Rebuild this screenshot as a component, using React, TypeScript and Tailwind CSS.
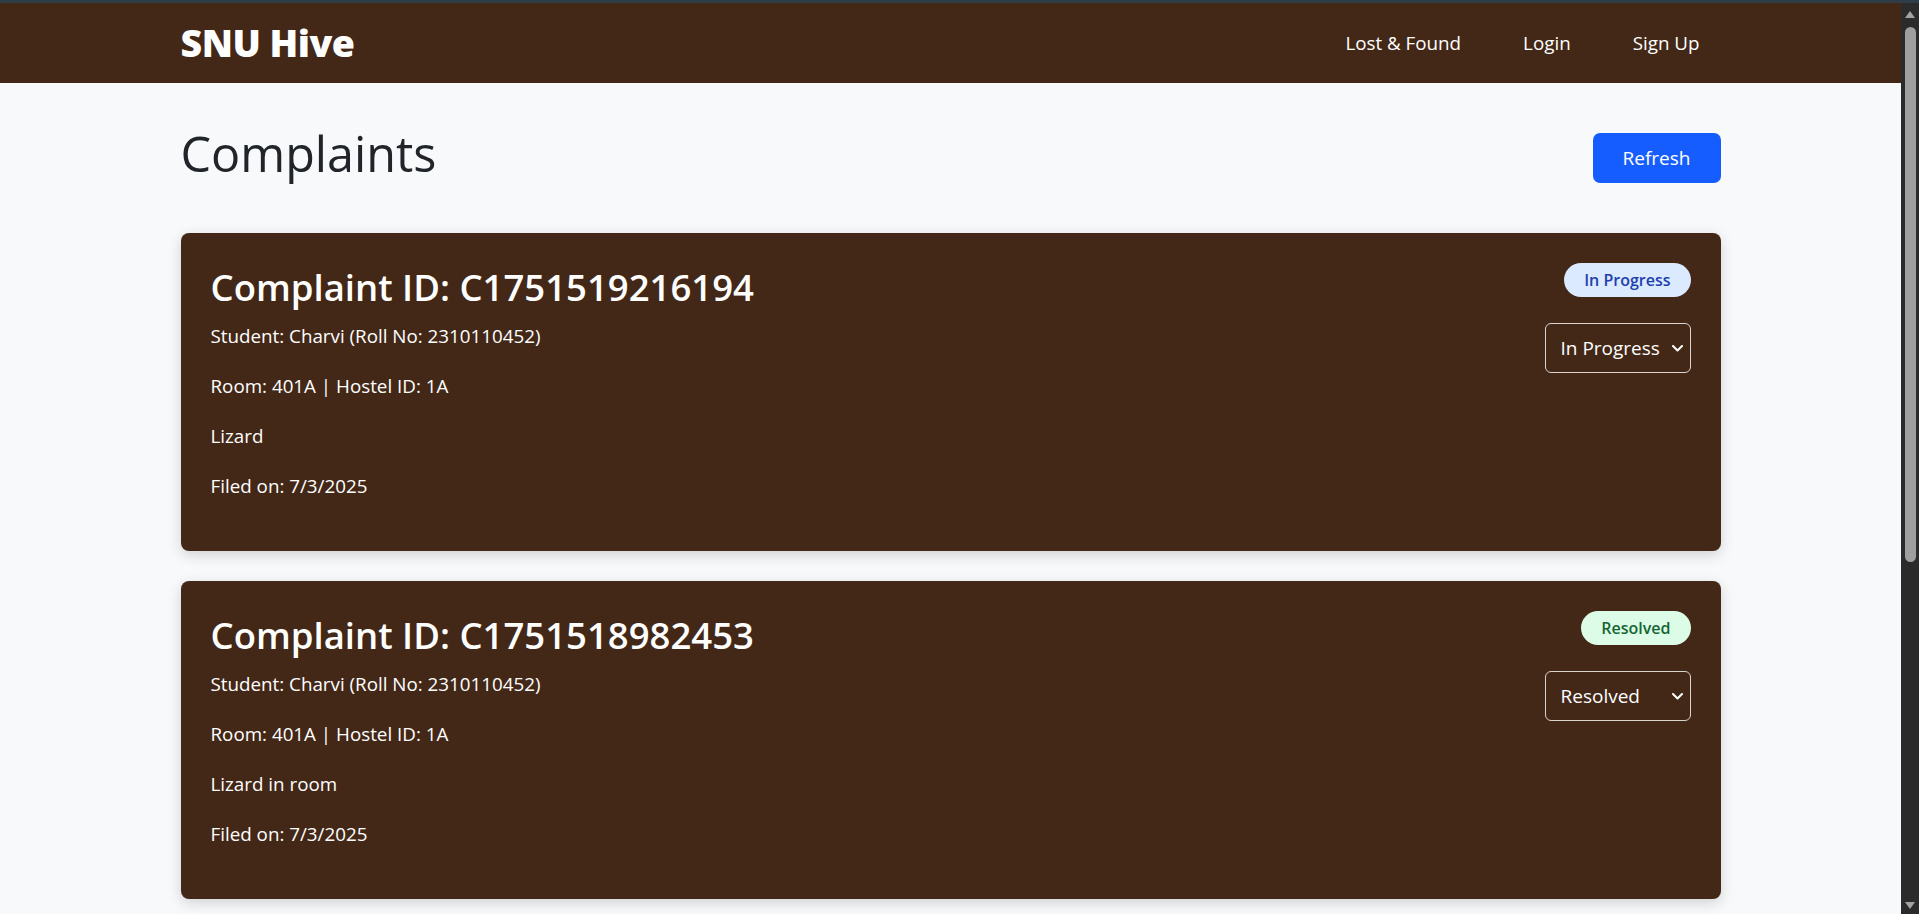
import React from "react";

type Complaint = {
    id: string;
    student: string;
    roll: string;
    room: string;
    hostel: string;
    description: string;
    filedOn: string;
    status: "In Progress" | "Resolved";
};

const complaints: Complaint[] = [
    {
        id: "C1751519216194",
        student: "Charvi",
        roll: "2310110452",
        room: "401A",
        hostel: "1A",
        description: "Lizard",
        filedOn: "7/3/2025",
        status: "In Progress",
    },
    {
        id: "C1751518982453",
        student: "Charvi",
        roll: "2310110452",
        room: "401A",
        hostel: "1A",
        description: "Lizard in room",
        filedOn: "7/3/2025",
        status: "Resolved",
    },
];

function StatusBadge({ status }: { status: Complaint["status"] }) {
    const styles =
        status === "Resolved"
            ? "bg-[#dcfce7] text-[#166534]"
            : "bg-[#dbeafe] text-[#1e40af]";
    return (
        <span className={`h-[34px] px-[20px] rounded-full flex items-center text-[16px] font-semibold ${styles}`}>
            {status}
        </span>
    );
}

function StatusSelect({ value }: { value: string }) {
    return (
        <div className="w-[146px] h-[50px] rounded-[6px] border border-[#d9d4d0] flex items-center justify-between pl-[15px] pr-[7px] text-[19px] text-white">
            <span>{value}</span>
            <svg width="11" height="7" viewBox="0 0 11 7" fill="none">
                <path d="M1 1l4.5 4.5L10 1" stroke="white" strokeWidth="2" strokeLinecap="round" strokeLinejoin="round" />
            </svg>
        </div>
    );
}

function ComplaintCard({ c }: { c: Complaint }) {
    return (
        <div className="bg-[#432818] rounded-[8px] shadow-[0_4px_14px_rgba(0,0,0,0.16)] p-[30px] mb-[30px] flex justify-between text-white">
            <div>
                <h2 className="text-[36.5px] leading-[48px] font-semibold mb-[10px]">Complaint ID: {c.id}</h2>
                <p className="text-[18.8px] leading-[30px] mb-[20px]">
                    Student: {c.student} (Roll No: {c.roll})
                </p>
                <p className="text-[18.8px] leading-[30px] mb-[20px]">
                    Room: {c.room} | Hostel ID: {c.hostel}
                </p>
                <p className="text-[18.8px] leading-[30px] mb-[20px]">{c.description}</p>
                <p className="text-[18.8px] leading-[30px] mb-[20px]">Filed on: {c.filedOn}</p>
            </div>
            <div className="flex flex-col items-end gap-[26px]">
                <StatusBadge status={c.status} />
                <StatusSelect value={c.status} />
            </div>
        </div>
    );
}

function Scrollbar() {
    return (
        <div className="w-[18px] shrink-0 bg-[#2b2b2b] flex flex-col items-center">
            <svg width="10" height="7" viewBox="0 0 10 7" className="mt-[8px]">
                <path d="M5 0L10 7H0z" fill="#a3a3a3" />
            </svg>
            <div className="w-[11px] h-[535px] mt-[9px] rounded-full bg-[#9f9f9f]" />
            <div className="flex-1" />
            <svg width="10" height="7" viewBox="0 0 10 7" className="mb-[5px]">
                <path d="M0 0H10L5 7z" fill="#a3a3a3" />
            </svg>
        </div>
    );
}

export default function App() {
    return (
        <div className="h-[914px] flex flex-col bg-[#f8f9fa] overflow-hidden font-['Open_Sans',sans-serif]">
            <div className="h-[3px] shrink-0 bg-[#2f3d47]" />
            <div className="flex flex-1 min-h-0">
                <div className="flex-1 min-w-0 overflow-hidden">
                    {/* Navbar */}
                    <nav className="h-[80px] bg-[#432818]">
                        <div className="w-[1540px] mx-auto h-full flex items-center justify-between">
                            <a href="#" className="text-[37.5px] font-extrabold text-white tracking-[-0.5px]">
                                SNU Hive
                            </a>
                            <div className="flex items-center gap-[22px] text-[18.8px] text-white">
                                <a href="#" className="px-[20px]">Lost &amp; Found</a>
                                <a href="#" className="px-[20px]">Login</a>
                                <a href="#" className="pl-[20px] pr-[21px]">Sign Up</a>
                            </div>
                        </div>
                    </nav>

                    {/* Main Content */}
                    <main className="w-[1540px] mx-auto pt-[40px]">
                        <div className="flex items-center justify-between mb-[40px]">
                            <h1 className="text-[48.5px] leading-[60px] text-[#212529] mb-[10px]">Complaints</h1>
                            <button className="h-[50px] px-[30px] rounded-[7px] bg-[#165dff] text-white text-[19px]">
                                Refresh
                            </button>
                        </div>
                        {complaints.map((c) => (
                            <ComplaintCard key={c.id} c={c} />
                        ))}
                    </main>
                </div>
                <Scrollbar />
            </div>
        </div>
    );
}
